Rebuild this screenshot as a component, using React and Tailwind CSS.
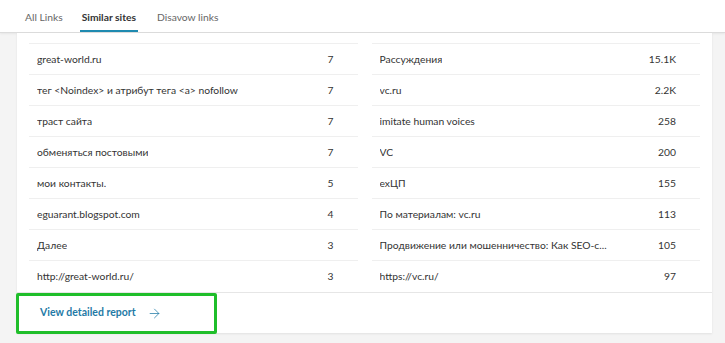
import { ArrowRight } from "lucide-react";

const left = [
  ["great-world.ru", "7"],
  ["тег <Noindex> и атрибут тега <a> nofollow", "7"],
  ["траст сайта", "7"],
  ["обменяться постовыми", "7"],
  ["мои контакты.", "5"],
  ["eguarant.blogspot.com", "4"],
  ["Далее", "3"],
  ["http://great-world.ru/", "3"],
];

const right = [
  ["Рассуждения", "15.1K"],
  ["vc.ru", "2.2K"],
  ["imitate human voices", "258"],
  ["VC", "200"],
  ["exЦП", "155"],
  ["По материалам: vc.ru", "113"],
  ["Продвижение или мошенничество: Как SEO-с...", "105"],
  ["https://vc.ru/", "97"],
];

function Column({ rows }) {
  return (
    <div className="flex-1 border-t border-[#efefef]">
      {rows.map(([label, n], i) => (
        <div
          key={i}
          className={`flex items-center justify-between h-[31px] pl-2 pr-6 pt-px ${
            i < rows.length - 1 ? "border-b border-[#efefef]" : ""
          }`}
        >
          <span className="truncate">{label}</span>
          <span>{n}</span>
        </div>
      ))}
    </div>
  );
}

export default function App() {
  return (
    <div
      className="w-[725px] h-[343px] bg-[#f4f4f4] overflow-hidden text-[10.3px] text-[#333]"
      style={{ fontFamily: 'Lato, "Open Sans", sans-serif' }}
    >
      <div className="h-[33px] bg-white border-b border-[#dcdcdc] shadow-[0_1px_2px_rgba(0,0,0,0.06)] flex items-stretch pl-[25px] text-[10.3px]">
        <div className="flex items-center pt-[4px] text-[#666]">All Links</div>
        <div className="flex items-center font-bold text-[#333] border-b-2 border-[#1f8ab0] pt-[5px] px-[2px] ml-[17px]">
          Similar sites
        </div>
        <div className="flex items-center pt-[4px] text-[#666] ml-[19px]">Disavow links</div>
      </div>
      <div className="ml-[17px] w-[695px] h-[300px] bg-white shadow-[0_1px_2px_rgba(0,0,0,0.08)] flex flex-col">
        <div className="flex gap-[14px] px-3 pt-[10px]">
          <Column rows={left} />
          <Column rows={right} />
        </div>
        <div className="border-t border-[#e6e6e6] flex-1 relative">
          <div className="absolute left-[-1px] top-0 w-[201px] h-[41px] border-[3px] border-[#1fbe2a] rounded-[2px]" />
          <div className="flex items-center h-full pl-[23px] gap-[11px] text-[#1f7aa6] font-bold text-[10.5px]">
            View detailed report
            <ArrowRight className="w-[15px] h-[15px]" strokeWidth={1.2} />
          </div>
        </div>
      </div>
    </div>
  );
}
